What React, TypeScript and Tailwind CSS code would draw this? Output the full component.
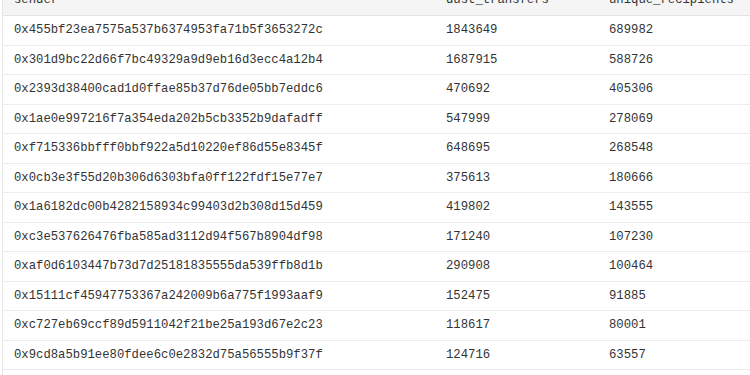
import React from "react";

const rows: [string, string, string][] = [
  ["0x455bf23ea7575a537b6374953fa71b5f3653272c", "1843649", "689982"],
  ["0x301d9bc22d66f7bc49329a9d9eb16d3ecc4a12b4", "1687915", "588726"],
  ["0x2393d38400cad1d0ffae85b37d76de05bb7eddc6", "470692", "405306"],
  ["0x1ae0e997216f7a354eda202b5cb3352b9dafadff", "547999", "278069"],
  ["0xf715336bbfff0bbf922a5d10220ef86d55e8345f", "648695", "268548"],
  ["0x0cb3e3f55d20b306d6303bfa0ff122fdf15e77e7", "375613", "180666"],
  ["0x1a6182dc00b4282158934c99403d2b308d15d459", "419802", "143555"],
  ["0xc3e537626476fba585ad3112d94f567b8904df98", "171240", "107230"],
  ["0xaf0d6103447b73d7d25181835555da539ffb8d1b", "290908", "100464"],
  ["0x15111cf45947753367a242009b6a775f1993aaf9", "152475", "91885"],
  ["0xc727eb69ccf89d5911042f21be25a193d67e2c23", "118617", "80001"],
  ["0x9cd8a5b91ee80fdee6c0e2832d75a56555b9f37f", "124716", "63557"],
  ["", "", ""],
];

export default function App() {
  return (
    <div className="w-[750px] h-[375px] overflow-hidden bg-white">
      <div
        className="ml-[2px] -mt-[15px] border-l border-[#e6e6e6] text-[12.25px] text-[#333333]"
        style={{ fontFamily: '"Liberation Mono", "DejaVu Sans Mono", monospace' }}
      >
        <div className="grid grid-cols-[432px_163px_1fr] h-[31px] bg-[#f5f5f5] border-b border-[#e3e3e3] items-center">
          <div className="pl-[11px]">sender</div>
          <div className="pl-[11px]">dust_transfers</div>
          <div className="pl-[11px]">unique_recipients</div>
        </div>
        {rows.map((r, i) => (
          <div
            key={i}
            className="grid grid-cols-[432px_163px_1fr] h-[29.5px] border-b border-[#ececec] items-center"
          >
            <div className="pl-[11px] whitespace-nowrap">{r[0]}</div>
            <div className="pl-[11px]">{r[1]}</div>
            <div className="pl-[11px]">{r[2]}</div>
          </div>
        ))}
      </div>
    </div>
  );
}
